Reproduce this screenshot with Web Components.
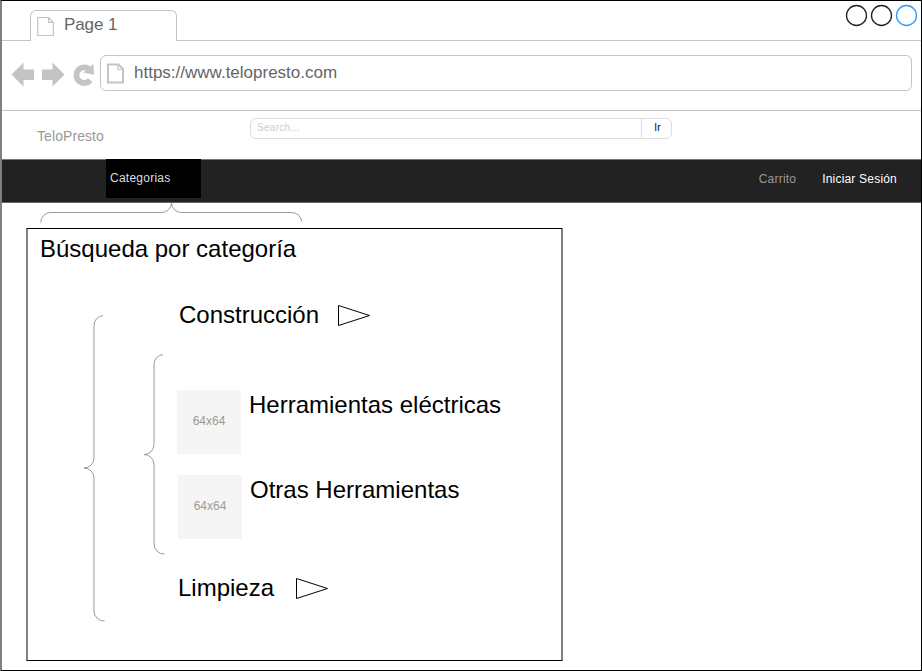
<!DOCTYPE html>
<html lang="es">
<head>
<meta charset="utf-8">
<title>TeloPresto</title>
<style>
html, body { margin: 0; background: #fff; font-family: "Liberation Sans", Arial, sans-serif; }
</style>
</head>
<body>
<browser-window>
  <tab-strip slot="chrome">Page 1</tab-strip>
  <address-bar slot="chrome">https://www.telopresto.com</address-bar>
  <site-header>TeloPresto</site-header>
  <site-nav><span slot="menu">Categorias</span><span slot="cart">Carrito</span><span slot="login">Iniciar Sesión</span></site-nav>
  <curly-brace kind="top"></curly-brace>
  <category-panel>
    <span slot="title">Búsqueda por categoría</span>
    <category-row style="--shape-gap:19px;--indent:35px">Construcción</category-row>
    <category-group>
      <sub-category>Herramientas eléctricas</sub-category>
      <sub-category style="margin:21px 0 0 1px">Otras Herramientas</sub-category>
    </category-group>
    <category-row style="--shape-gap:22px;--indent:34px;margin-top:20px">Limpieza</category-row>
  </category-panel>
</browser-window>
<script>
function define(name, html, after) {
  customElements.define(name, class extends HTMLElement {
    constructor() {
      super();
      this.attachShadow({ mode: 'open' }).innerHTML = html;
    }
    connectedCallback() { if (after) after(this); }
  });
}

define('browser-window', `
<style>
:host { display: flex; flex-direction: column; box-sizing: border-box; width: 922px; height: 671px;
  border: 1px solid #000; border-left: 2px solid #808080; background: #fff; overflow: hidden; }
</style>
<slot name="chrome"></slot><slot></slot>`);

define('tab-strip', `
<style>
:host { display: flex; height: 40px; flex: none; color: #666; font-size: 17px; }
.line { box-sizing: border-box; border-bottom: 1px solid #c4c4c4; }
.start { width: 28px; }
.end { flex: 1; display: flex; justify-content: flex-end; padding: 3px 2px 0 0; gap: 1px; }
.tab { box-sizing: border-box; display: flex; width: 147px; margin-top: 9px; padding: 6px 0 0 6px;
  border: 1px solid #c4c4c4; border-bottom: 0; border-radius: 6px 6px 0 0; }
.label { line-height: 20px; margin: -2px 0 0 10px; white-space: nowrap; letter-spacing: -.1px; }
svg { flex: none; }
</style>
<div class="line start"></div>
<div class="tab">
  <svg width="17" height="20" fill="none" stroke="#c4c4c4" stroke-width="1.2"><path d="M.7 .5H11.5L16.3 5.3V18.5H.7ZM11.5 .5V5.3H16.3"/></svg>
  <span class="label"><slot></slot></span>
</div>
<div class="line end">
  <svg width="24" height="24" fill="none" stroke="#222" stroke-width="1.3"><circle cx="11.5" cy="11.5" r="10"/></svg>
  <svg width="24" height="24" fill="none" stroke="#222" stroke-width="1.3"><circle cx="11.5" cy="11.5" r="10"/></svg>
  <svg width="24" height="24" fill="none" stroke="#3399ff" stroke-width="1.3"><circle cx="11.5" cy="11.5" r="10"/></svg>
</div>`);

define('address-bar', `
<style>
:host { display: flex; box-sizing: border-box; height: 70px; flex: none; padding: 14px 9px 0 9px;
  border-bottom: 1px solid #c4c4c4; color: #666; font-size: 17px; }
svg { flex: none; }
.tools { margin-top: 5px; }
.box { box-sizing: border-box; flex: 1; height: 36px; display: flex; margin-left: 4px; padding: 7px 0 0 6px;
  border: 1px solid #c4c4c4; border-radius: 6px; }
.url { line-height: 20px; margin: 0 0 0 9px; }
</style>
<svg class="tools" width="85" height="28" fill="#c4c4c4">
  <path d="M.5 14.5 12.5 2.5V9.5H23V20H12.5V26.5Z"/>
  <path d="M53.5 14.5 41.5 2.5V9.5H31V20H41.5V26.5Z"/>
  <path d="M78.2 9.2A7.8 7.8 0 1 0 79.2 20.2" fill="none" stroke="#c4c4c4" stroke-width="5.8"/>
  <path d="M82.3 4 83 14.8 72.3 12.6Z"/>
</svg>
<div class="box">
  <svg width="18" height="21" fill="none" stroke="#c4c4c4" stroke-width="2"><path d="M1 1.5H11.5L16 6V19.5H1Z"/><path d="M11 2V6.5H16" stroke-width="1.2"/></svg>
  <span class="url"><slot></slot></span>
</div>`);

define('site-header', `
<style>
:host { display: flex; box-sizing: border-box; height: 48px; flex: none; }
.brand { box-sizing: border-box; width: 248px; padding: 17px 0 0 35px; color: #999; font-size: 14px; line-height: 16px; letter-spacing: .08px; }
.search { box-sizing: border-box; display: flex; width: 422px; height: 21px; margin-top: 7px;
  border: 1px solid #ddd; border-radius: 6px; font-size: 10px; line-height: 18px; }
.hint { flex: 1; padding-left: 6px; color: #ccc; letter-spacing: .3px; }
.go { width: 30px; padding-left: 2px; border-left: 1px solid #ddd; text-align: center; color: #000; box-sizing: border-box; letter-spacing: .2px; }
</style>
<div class="brand"><slot></slot></div>
<div class="search"><span class="hint">Search...</span><span class="go">Ir</span></div>`);

define('site-nav', `
<style>
:host { display: flex; box-sizing: border-box; height: 44px; flex: none; background: #222; font-size: 12px;
  border-top: 1px solid #777; border-bottom: 1px solid #666; line-height: 16px; color: #999; }
.menu { box-sizing: border-box; width: 95px; height: 39px; margin: -1px 0 0 104px; padding: 11px 0 0 4px;
  background: #000; color: #ddd; letter-spacing: .25px; }
.links { flex: 1; display: flex; justify-content: flex-end; gap: 26px; padding: 11px 24px 0 0; letter-spacing: .2px; }
.login { color: #fff; }
</style>
<div class="menu"><slot name="menu"></slot></div>
<div class="links"><span><slot name="cart"></slot></span><span class="login"><slot name="login"></slot></span></div>`);

define('curly-brace', `
<style>
:host { display: block; flex: none; }
:host([kind=top]) { height: 25px; padding-left: 38px; }
svg { display: block; overflow: visible; }
</style>
<svg fill="none"></svg>`, host => {
  const svg = host.shadowRoot.querySelector('svg');
  if (host.getAttribute('kind') === 'top') {
    svg.setAttribute('width', 262);
    svg.setAttribute('height', 20);
    svg.innerHTML = '<path stroke="#999" d="M.7 19.5A10 10 0 0 1 10.7 9.5H121.5A10 10 0 0 0 131.5 0A10 10 0 0 0 141.5 9.5H251.7A10 10 0 0 1 261.7 18.5"/>';
  } else {
    const h = +host.getAttribute('length'), m = +host.getAttribute('middle');
    svg.setAttribute('width', 20);
    svg.setAttribute('height', h);
    svg.innerHTML = `<path stroke="#999" d="M19 .5A10 10 0 0 0 10 10.5V${m - 10}A10 10 0 0 1 0 ${m}A10 10 0 0 1 10 ${m + 10}V${h - 10}A10 10 0 0 0 20.5 ${h}"/>`;
  }
});

define('category-panel', `
<style>
:host { display: block; box-sizing: border-box; flex: none; width: 537px; height: 433px; margin-left: 24px;
  border: 1px solid #000; border-left: 2px solid #808080; border-right: 2px solid #808080; font-size: 24px; line-height: 28px; }
.title { padding: 6px 0 0 12px; }
.body { display: flex; gap: 40px; padding-left: 56px; }
curly-brace { margin-top: 52px; }
.list { padding-top: 38px; }
</style>
<div class="title"><slot name="title"></slot></div>
<div class="body"><curly-brace length="306" middle="153"></curly-brace><div class="list"><slot></slot></div></div>`);

define('category-row', `
<style>
:host { display: flex; height: 28px; padding-left: var(--indent); white-space: nowrap; }
svg { margin: 3px 0 0 var(--shape-gap); }
</style>
<slot></slot>
<svg width="33" height="23" fill="none" stroke="#000"><path d="M.5 1.5 31.5 11.5 .5 21.5Z"/></svg>`);

define('category-group', `
<style>
:host { display: flex; gap: 12.5px; height: 200px; margin-top: 25px; }
.items { padding-top: 36.4px; }
</style>
<curly-brace length="200" middle="100.5"></curly-brace>
<div class="items"><slot></slot></div>`);

define('sub-category', `
<style>
:host { display: flex; gap: 8.5px; height: 64px; white-space: nowrap; }
.thumb { box-sizing: border-box; width: 64px; height: 64px; padding: 1px 0 0 1px; background: #f5f5f5; color: #999;
  font-size: 12px; line-height: 60px; text-align: center; }
.name { padding-top: .6px; }
</style>
<div class="thumb">64x64</div><span class="name"><slot></slot></span>`);
</script>
</body>
</html>
